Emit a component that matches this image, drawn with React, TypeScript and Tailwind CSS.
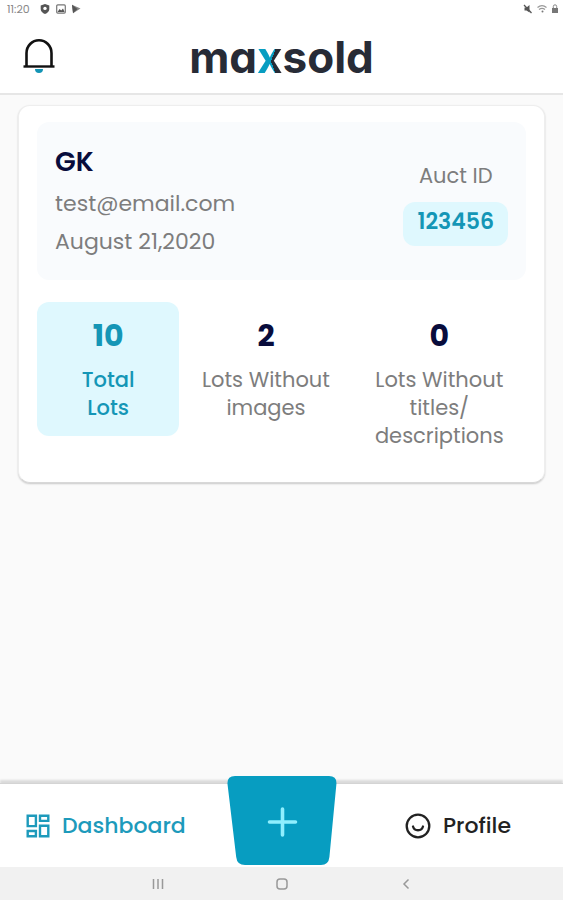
import type { ReactNode } from "react";

type StatProps = {
  value: number;
  label: ReactNode;
  active?: boolean;
};

function StatusBar() {
  return (
    <div className="flex h-[18px] items-center justify-between pl-[7px] pr-1 text-[#888888]">
      <div className="flex items-center gap-[6px]">
        <span className="text-[11px] leading-4">11:20</span>
        <svg className="ml-1 h-[10px] w-[10px]" viewBox="0 0 10 10" aria-hidden="true">
          <path d="M5 0 9.3 1.6V5C9.3 7.4 7.4 9.2 5 10 2.6 9.2.7 7.4.7 5V1.6Z" fill="#555555" />
          <circle cx="5" cy="4.4" r="1.7" fill="#ffffff" />
        </svg>
        <svg className="h-[10px] w-[10px]" viewBox="0 0 10 10" aria-hidden="true">
          <rect x=".7" y=".9" width="8.6" height="8.2" rx="1" fill="none" stroke="#777777" strokeWidth="1.2" />
          <path d="M1.5 8 3.6 5l1.6 1.6L7 4.5 8.6 8Z" fill="#555555" />
        </svg>
        <svg className="h-[10px] w-[10px]" viewBox="0 0 10 10" aria-hidden="true">
          <path d="M0 .8 8.500 4.4 1 9.2Z" fill="#888888" />
          <path d="M0 .8 5.500 5 1 9.2Z" fill="#555555" />
        </svg>
      </div>
      <div className="flex items-center gap-1">
        <svg className="h-[10px] w-[10px]" viewBox="0 0 10 10" aria-hidden="true">
          <path d="M1.5 3.5h2L6.5 1v7.5L3.5 6.5h-2Z" fill="#555555" />
          <path d="m1 1 7.5 8" stroke="#555555" strokeWidth="1.2" />
        </svg>
        <svg className="h-[10px] w-[10px]" viewBox="0 0 10 10" fill="none" stroke="#999999" aria-hidden="true">
          <path d="M.5 3.5Q5-.3 9.5 3.5M2 5.5q3-2.4 6 0" strokeWidth="1.2" />
          <circle cx="5.5" cy="7.6" r="1" fill="#777777" stroke="none" />
        </svg>
        <svg className="h-[10px] w-[8px]" viewBox="0 0 8 10" aria-hidden="true">
          <path d="M2.3 4V2.5a1.7 1.7 0 0 1 3.4 0V4" fill="none" stroke="#888888" />
          <rect x="1" y="4" width="6" height="5" fill="#777777" />
        </svg>
      </div>
    </div>
  );
}

function Header() {
  return (
    <header className="grid h-[77px] grid-cols-[1fr_auto_1fr] items-center border-b-2 border-[#e6e6e6] bg-white px-[23px]">
      <button type="button" aria-label="Notifications" className="w-8">
        <svg className="h-9 w-8" viewBox="0 0 32 36" fill="none" aria-hidden="true">
          <path d="M3.5 28V15.2a12.5 13 0 0 1 25 0V28" stroke="#111111" strokeWidth="2.6" />
          <path d="M.5 28.5h31" stroke="#111111" strokeWidth="2.4" />
          <path d="M12 31h8a4 4 0 0 1-8 0Z" fill="#1394b5" />
        </svg>
      </button>
      <h1 className="pt-[2px] font-[Inter,sans-serif] text-[44px] leading-[52px] font-bold text-[#272b36] [font-feature-settings:'cv11']">
        ma
        <span className="bg-[conic-gradient(from_20deg_at_54%_58%,#272b36_140deg,#079dc1_140deg)] bg-clip-text text-transparent">
          x
        </span>
        sold
      </h1>
    </header>
  );
}

function Stat({ value, label, active = false }: StatProps) {
  return (
    <div className={`rounded-xl pt-4 pb-[14px] text-center ${active ? "bg-[#dff8fe] text-[#1496b6]" : "text-[#7d7d7d]"}`}>
      <p className={`text-[30px] leading-9 font-bold ${active ? "" : "text-[#080c3c]"}`}>{value}</p>
      <p className={`mt-3 text-[21px] leading-7 ${active ? "font-medium" : ""}`}>{label}</p>
    </div>
  );
}

function AuctionCard() {
  return (
    <section className="mx-[18px] mt-[10px] rounded-xl border border-[#eeeeee] border-b-[#d8d8d8] bg-white px-[18px] pt-4 pb-[18px] shadow-[0_1px_2px_#00000033]">
      <div className="flex items-center justify-between rounded-xl bg-[#f9fbfd] px-[18px] py-5">
        <div className="text-[22px] text-[#7d7d7d]">
          <h2 className="text-[27px] leading-10 font-semibold text-[#080c3c]">GK</h2>
          <p className="mt-[2px] leading-10">test@email.com</p>
          <p className="leading-9">August 21,2020</p>
        </div>
        <div className="flex flex-col items-center gap-2 pt-[2px]">
          <span className="text-[21px] leading-9 text-[#7d7d7d]">Auct ID</span>
          <span className="rounded-xl bg-[#dff8fe] px-[14px] pt-1 pb-2 text-[22px] leading-8 font-semibold text-[#1496b6]">
            123456
          </span>
        </div>
      </div>
      <div className="mt-[22px] grid grid-cols-[142fr_173fr_173fr] items-start">
        <Stat value={10} label={<>Total<br />Lots</>} active />
        <Stat value={2} label={<>Lots Without<br />images</>} />
        <Stat value={0} label={<>Lots Without<br />titles/<br />descriptions</>} />
      </div>
    </section>
  );
}

function DashboardIcon() {
  return (
    <svg className="h-6 w-6" viewBox="0 0 24 24" fill="none" stroke="#1d9abb" strokeWidth="2.4" aria-hidden="true">
      <path d="M1.7 1.7h8.2v10.4H1.7ZM14 1.7h8.3v5.2H14ZM1.7 17h8.2v5.2H1.7ZM14 11.8h8.3v10.4H14Z" />
    </svg>
  );
}

function ProfileIcon() {
  return (
    <svg className="h-[26px] w-[26px]" viewBox="0 0 26 26" fill="none" stroke="#222222" strokeWidth="2.3" aria-hidden="true">
      <circle cx="13" cy="13" r="11.3" />
      <path d="M8 13.500a5.2 5.2 0 0 0 10 0" strokeLinecap="round" />
    </svg>
  );
}

function TabBar() {
  return (
    <nav className="grid h-[84px] grid-cols-[1fr_110px_1fr] border-t border-[#d4d4d4] bg-white shadow-[0_-3px_2px_#00000020]">
      <a href="#dashboard" className="flex items-center gap-3 pl-[26px] text-[22px] leading-8 font-medium text-[#1d9abb]">
        <DashboardIcon />
        Dashboard
      </a>
      <button type="button" aria-label="Add lot" className="-mt-2 h-[90px]">
        <svg className="h-[90px] w-[110px]" viewBox="0 0 110 90" aria-hidden="true">
          <path d="M8 0h94q8 0 7.4 8l-7 73q-.8 8-8.4 8H18q-8 0-8.8-8L.5 8Q0 0 8 0Z" fill="#079dc1" />
          <path d="M55.5 33v26M42.500 46h26" stroke="#8feffe" strokeWidth="3.6" strokeLinecap="round" />
        </svg>
      </button>
      <a href="#profile" className="flex items-center justify-end gap-3 pr-[52px] text-[22px] leading-8 font-medium text-[#222222]">
        <ProfileIcon />
        Profile
      </a>
    </nav>
  );
}

function SystemNav() {
  return (
    <div className="grid h-[33px] grid-cols-[1fr_124px_124px_1fr] items-center bg-[#f1f1f1]">
      <button type="button" aria-label="Recent apps" className="col-start-1 -mr-[6px] justify-self-end">
        <svg className="h-3 w-3" viewBox="0 0 12 12" stroke="#999999" strokeWidth="1.5" aria-hidden="true">
          <path d="M1.500 1v10M6 1v10M10.500 1v10" />
        </svg>
      </button>
      <button type="button" aria-label="Home" className="col-span-2 justify-self-center">
        <svg className="h-3 w-3" viewBox="0 0 12 12" fill="none" stroke="#999999" strokeWidth="1.5" aria-hidden="true">
          <rect x="1" y="1" width="10" height="10" rx="3" />
        </svg>
      </button>
      <button type="button" aria-label="Back" className="-ml-[6px] justify-self-start">
        <svg className="h-3 w-3" viewBox="0 0 12 12" fill="none" stroke="#999999" strokeWidth="1.5" aria-hidden="true">
          <path d="M8.500 1.500 4 6l4.500 4.500" />
        </svg>
      </button>
    </div>
  );
}

export default function App() {
  return (
    <div className="flex min-h-screen flex-col bg-white font-[Poppins,Inter,sans-serif]">
      <StatusBar />
      <Header />
      <main className="flex-1 bg-[#fafafa]">
        <AuctionCard />
      </main>
      <TabBar />
      <SystemNav />
    </div>
  );
}
